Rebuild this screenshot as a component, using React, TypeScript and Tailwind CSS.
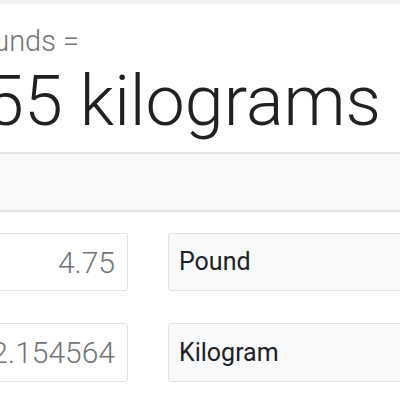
export default function App() {
  return (
    <div
      className="w-[400px] h-[400px] overflow-hidden bg-white text-[#202124]"
      style={{ fontFamily: "Roboto, 'Liberation Sans', sans-serif" }}
    >
      {/* top edge of the surrounding page */}
      <div className="h-[4px] bg-[#f1f1f1]" />

      {/* conversion sentence */}
      <div className="mt-[23px] flex w-[79px] justify-end whitespace-nowrap text-[29px] font-light leading-[29px] text-[#70757a]">
        4.75 pounds =
      </div>
      <div className="mt-[10px] flex w-[381px] justify-end whitespace-nowrap text-[70px] font-light leading-[70px] text-[#202124]">
        2.155 kilograms
      </div>

      {/* quantity selector */}
      <div className="mt-[16px] -mx-[20px] h-[60px] border-y-2 border-[#e3e4e6] bg-[#f8f9fa]" />

      {/* value rows */}
      <div className="mt-[21px] flex flex-col gap-[32px] -ml-[40px]">
        <div className="flex gap-[40px]">
          <div className="flex h-[58px] w-[168px] shrink-0 items-center justify-end overflow-hidden whitespace-nowrap rounded-[3px] border border-[#dfe1e5] bg-white pr-[12px] text-[30px] font-light text-[#70757a]">
            4.75
          </div>
          <div className="flex h-[58px] w-[300px] shrink-0 items-center rounded-[3px] border border-[#dfe1e5] bg-[#f8f9fa] pl-[10px] text-[25px] text-[#202124]">
            Pound
          </div>
        </div>
        <div className="flex gap-[40px]">
          <div className="flex h-[59px] w-[168px] shrink-0 items-center justify-end overflow-hidden whitespace-nowrap rounded-[3px] border border-[#dfe1e5] bg-white pr-[12px] text-[30px] font-light text-[#70757a]">
            2.154564
          </div>
          <div className="flex h-[59px] w-[300px] shrink-0 items-center rounded-[3px] border border-[#dfe1e5] bg-[#f8f9fa] pl-[10px] text-[25px] text-[#202124]">
            Kilogram
          </div>
        </div>
      </div>
    </div>
  );
}
